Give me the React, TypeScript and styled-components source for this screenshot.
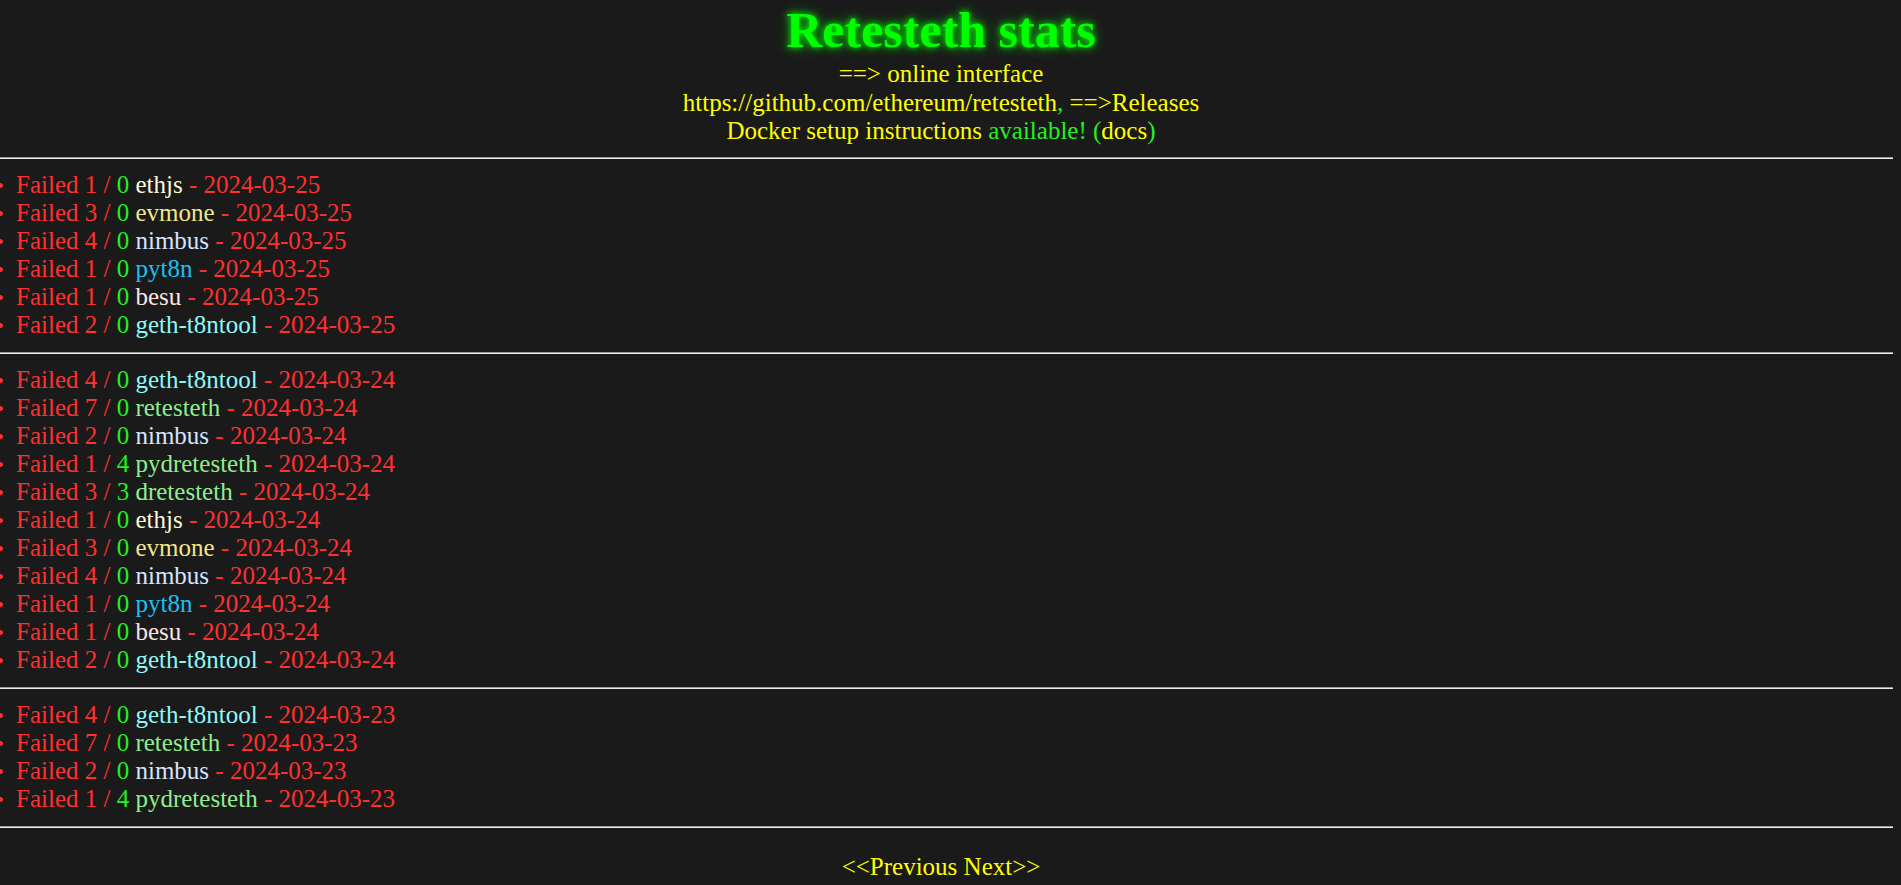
import React from "react";
import styled, { createGlobalStyle } from "styled-components";

const GlobalStyle = createGlobalStyle`
  html, body {
    margin: 0;
    padding: 0;
    background-color: #1a1a1a;
  }
  body {
    font-family: "Liberation Serif", "Times New Roman", serif;
    font-size: 25px;
    color: #ff3030;
    overflow: hidden;
  }
`;

type Run = {
  failed: number;
  extra: number;
  client: string;
  date: string;
};

const clientColors: Record<string, string> = {
  ethjs: "#fff8dc",
  evmone: "#f0e68c",
  nimbus: "#d6e4ff",
  pyt8n: "#1ebff0",
  besu: "#ffe4e1",
  "geth-t8ntool": "#8ff8f8",
  retesteth: "#90ee90",
  pydretesteth: "#90ee90",
  dretesteth: "#90ee90",
};

const groups: Run[][] = [
  [
    { failed: 1, extra: 0, client: "ethjs", date: "2024-03-25" },
    { failed: 3, extra: 0, client: "evmone", date: "2024-03-25" },
    { failed: 4, extra: 0, client: "nimbus", date: "2024-03-25" },
    { failed: 1, extra: 0, client: "pyt8n", date: "2024-03-25" },
    { failed: 1, extra: 0, client: "besu", date: "2024-03-25" },
    { failed: 2, extra: 0, client: "geth-t8ntool", date: "2024-03-25" },
  ],
  [
    { failed: 4, extra: 0, client: "geth-t8ntool", date: "2024-03-24" },
    { failed: 7, extra: 0, client: "retesteth", date: "2024-03-24" },
    { failed: 2, extra: 0, client: "nimbus", date: "2024-03-24" },
    { failed: 1, extra: 4, client: "pydretesteth", date: "2024-03-24" },
    { failed: 3, extra: 3, client: "dretesteth", date: "2024-03-24" },
    { failed: 1, extra: 0, client: "ethjs", date: "2024-03-24" },
    { failed: 3, extra: 0, client: "evmone", date: "2024-03-24" },
    { failed: 4, extra: 0, client: "nimbus", date: "2024-03-24" },
    { failed: 1, extra: 0, client: "pyt8n", date: "2024-03-24" },
    { failed: 1, extra: 0, client: "besu", date: "2024-03-24" },
    { failed: 2, extra: 0, client: "geth-t8ntool", date: "2024-03-24" },
  ],
  [
    { failed: 4, extra: 0, client: "geth-t8ntool", date: "2024-03-23" },
    { failed: 7, extra: 0, client: "retesteth", date: "2024-03-23" },
    { failed: 2, extra: 0, client: "nimbus", date: "2024-03-23" },
    { failed: 1, extra: 4, client: "pydretesteth", date: "2024-03-23" },
  ],
];

const App: React.FC = () => {
  return (
    <Page>
      <GlobalStyle />
      <Header>
        <Title>Retesteth stats</Title>
        <Line>
          <YellowLink>==&gt; online interface</YellowLink>
        </Line>
        <Line>
          <YellowLink>https://github.com/ethereum/retesteth</YellowLink>,{" "}
          <YellowLink>==&gt;Releases</YellowLink>
        </Line>
        <Line>
          <YellowLink>Docker setup instructions</YellowLink> available! (
          <YellowLink>docs</YellowLink>)
        </Line>
      </Header>

      {groups.map((runs, i) => (
        <React.Fragment key={i}>
          <Rule />
          <RunList>
            {runs.map((r, j) => (
              <RunItem key={j}>
                Failed {r.failed} / <Count>{r.extra}</Count>{" "}
                <Client $color={clientColors[r.client]}>{r.client}</Client> - {r.date}
              </RunItem>
            ))}
          </RunList>
        </React.Fragment>
      ))}
      <Rule />

      <Pager>
        <YellowLink>&lt;&lt;Previous</YellowLink> <YellowLink>Next&gt;&gt;</YellowLink>
      </Pager>
    </Page>
  );
};

const Page = styled.div`
  width: 1901px;
  min-height: 885px;
`;

const Header = styled.header`
  display: flex;
  flex-direction: column;
  align-items: center;
  padding-right: 19px;
  margin-bottom: 11px;
  color: #22f022;
`;

const Title = styled.h1`
  margin: 0;
  font-size: 50px;
  line-height: 60px;
  font-weight: bold;
  color: #00ff00;
  text-shadow: 0 0 6px #00ff00, 0 0 14px rgba(0, 255, 0, 0.6);
`;

const Line = styled.div`
  line-height: 28.5px;
  white-space: pre;
`;

const YellowLink = styled.span`
  color: #ffff00;
  cursor: pointer;
`;

const Rule = styled.hr`
  margin: 0 8px 0 0;
  height: 0;
  border: none;
  border-top: 1px solid #9a9a9a;
  border-bottom: 1px solid #eeeeee;
`;

const RunList = styled.ul`
  list-style: none;
  margin: 12px 0 13px;
  padding: 0;
`;

const RunItem = styled.li`
  position: relative;
  padding-left: 16px;
  line-height: 28px;
  color: #ff3030;
  white-space: pre;

  &::before {
    content: "";
    position: absolute;
    left: -3px;
    top: 12px;
    width: 6px;
    height: 5px;
    border-radius: 50%;
    background: #ff3030;
  }
`;

const Count = styled.span`
  color: #22f022;
`;

const Client = styled.span<{ $color: string }>`
  color: ${(p) => p.$color};
`;

const Pager = styled.div`
  margin-top: 25px;
  padding-right: 19px;
  text-align: center;
  line-height: 28px;
`;

export default App;
